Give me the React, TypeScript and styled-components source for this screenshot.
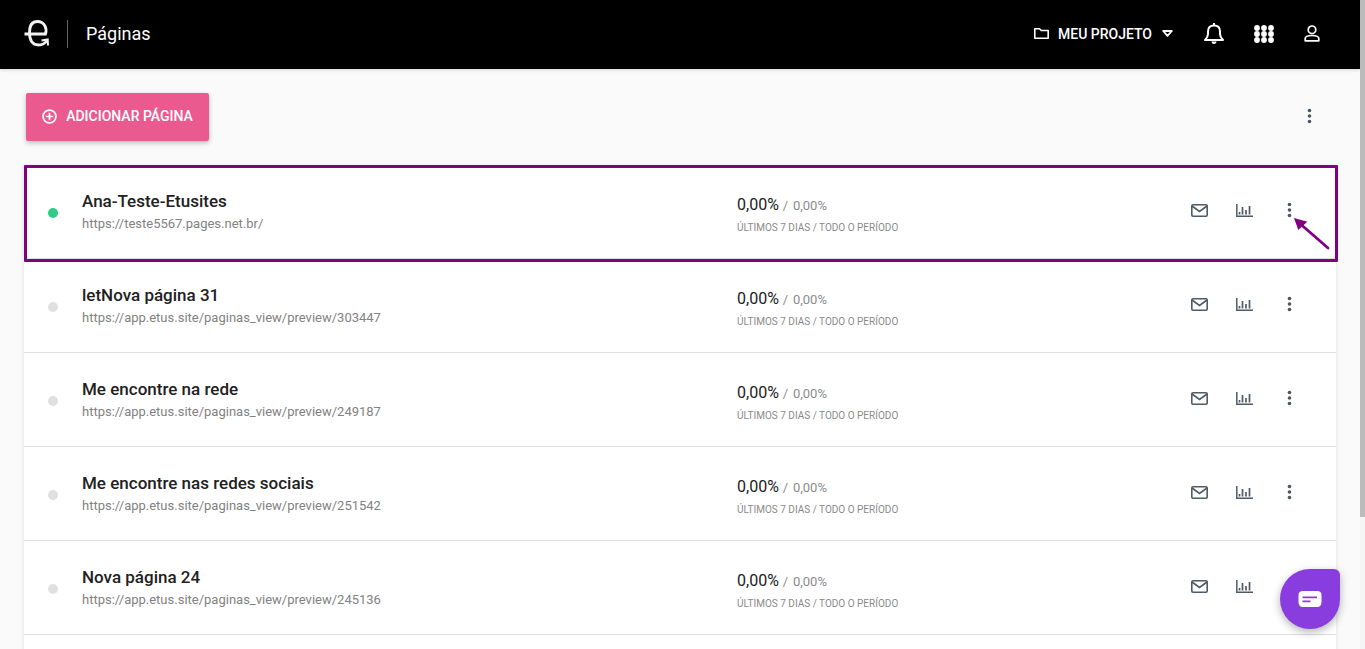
import React from "react";
import styled, { createGlobalStyle } from "styled-components";

const GlobalStyle = createGlobalStyle`
  html, body {
    margin: 0;
    padding: 0;
    height: 100%;
    overflow: hidden;
    background: #fafafa;
    font-family: Roboto, "Liberation Sans", sans-serif;
  }
`;

const Page = styled.div`
  display: flex;
  height: 649px;
  overflow: hidden;
`;

const Main = styled.div`
  flex: 1;
  min-width: 0;
  display: flex;
  flex-direction: column;
`;

const ScrollTrack = styled.div`
  width: 5px;
  background: #f5f5f5;
`;

const ScrollThumb = styled.div`
  height: 517px;
  background: #bbbbbb;
`;

const Header = styled.header`
  height: 69px;
  box-sizing: border-box;
  flex: none;
  background: #000;
  color: #fff;
  display: flex;
  align-items: center;
  padding: 0 40px 2px 24px;
  box-shadow: 0 1px 3px rgba(0, 0, 0, 0.15);
`;

const Divider = styled.span`
  width: 1px;
  height: 28px;
  background: #666;
  margin: 0 18px;
`;

const Title = styled.h1`
  margin: 0;
  font-size: 18px;
  font-weight: 400;
  flex: 1;
`;

const Project = styled.div`
  display: flex;
  align-items: center;
  font-size: 14px;
  font-weight: 500;
  margin-right: 31px;
`;

const ProjectName = styled.span`
  margin: 0 10px 0 9px;
`;

const HeaderIcons = styled.div`
  display: flex;
  align-items: center;
  gap: 30px;
`;

const Content = styled.main`
  padding: 24px 24px 0 24px;
  display: flex;
  flex-direction: column;
`;

const Toolbar = styled.div`
  display: flex;
  align-items: center;
  justify-content: space-between;
  padding: 0 18px 0 2px;
  margin-bottom: 24px;
`;

const ToolbarMenu = styled.div`
  display: flex;
  margin-bottom: 2px;
`;

const AddButton = styled.button`
  width: 183px;
  height: 48px;
  border: 0;
  border-radius: 2px;
  background: #ea5a8f;
  color: #fff;
  font-family: inherit;
  font-size: 14px;
  font-weight: 500;
  display: flex;
  align-items: center;
  justify-content: center;
  gap: 9px;
  padding: 0 0 2px;
  box-shadow: 0 2px 5px rgba(0, 0, 0, 0.25);
`;

const List = styled.div`
  display: flex;
  flex-direction: column;
  width: 1312px;
  background: #fff;
  box-shadow: 0 1px 4px rgba(0, 0, 0, 0.12);
`;

const Row = styled.div`
  position: relative;
  flex: none;
  height: 94px;
  box-sizing: border-box;
  display: grid;
  grid-template-columns: 34px 655px 1fr auto;
  align-items: center;
  padding: 3px 38px 0 24px;
  border-bottom: 1px solid #e0e0e0;
`;

const ListTail = styled.div`
  height: 20px;
  flex: none;
`;

const Highlight = styled.div`
  position: absolute;
  left: 0;
  top: 0;
  width: 1314px;
  height: 97px;
  box-sizing: border-box;
  border: 3px solid #800080;
  border-radius: 1px;
  pointer-events: none;
`;

const Dot = styled.span<{ $on?: boolean }>`
  width: 10px;
  height: 10px;
  border-radius: 50%;
  background: ${(p) => (p.$on ? "#2ecc87" : "#e0e0e0")};
`;

const Name = styled.div`
  font-size: 17px;
  font-weight: 500;
  color: #212121;
  line-height: 20px;
  margin-bottom: 4px;
`;

const Url = styled.div`
  font-size: 13px;
  color: #828282;
  line-height: 18px;
`;

const PageInfo = styled.div`
  padding-bottom: 3px;
`;

const Stats = styled.div`
  display: flex;
  flex-direction: column;
  padding-top: 4px;
`;

const StatLine = styled.div`
  display: flex;
  align-items: baseline;
  gap: 4px;
  line-height: 20px;
  margin-bottom: 5px;
`;

const StatMain = styled.span`
  font-size: 16px;
  color: #212121;
`;

const StatAll = styled.span`
  font-size: 13px;
  color: #8c8c8c;
  word-spacing: 1.5px;
`;

const StatLabel = styled.div`
  font-size: 10px;
  color: #8a8a8a;
  line-height: 14px;
`;

const Actions = styled.div`
  display: flex;
  align-items: center;
  gap: 28px;
  margin-bottom: 6px;
`;

const ChatBubble = styled.div`
  position: fixed;
  left: 1280px;
  top: 569px;
  width: 60px;
  height: 60px;
  border-radius: 50% 6px 50% 50%;
  background: #8a3ddf;
  box-shadow: 0 3px 8px rgba(0, 0, 0, 0.3);
  display: flex;
  align-items: center;
  justify-content: center;
`;

const Arrow = styled.svg`
  position: absolute;
  left: 1266px;
  top: 50px;
`;

const Logo = () => (
  <svg width="25" height="27" viewBox="0 0 25 27" fill="none" stroke="#f2f2f2" strokeWidth="2.8">
    <path d="M0.500 14 H21.500 C23.500 8 20 1.500 13.500 1.500 C8 1.500 5.500 6 5.500 12.500 C5.500 20.500 8.500 25 14.500 25 C18 25 21 23.500 23 20.500" />
    <path d="M17.500 20.500 L23.700 19.500 L24 25.500" strokeWidth="2" />
  </svg>
);

const FolderIcon = () => (
  <svg width="15" height="11" viewBox="0 0 15 11" fill="none" stroke="#fff" strokeWidth="1.600">
    <path d="M0.800 0.800 H5.500 L7.200 2.500 H14.200 V10.200 H0.800 Z" strokeLinejoin="round" />
  </svg>
);

const Caret = () => (
  <svg width="11" height="7" viewBox="0 0 11 7" fill="none" stroke="#fff" strokeWidth="1.800">
    <path d="M1.200 1 H9.800 L5.500 5.800 Z" strokeLinejoin="round" />
  </svg>
);

const BellIcon = () => (
  <svg width="20" height="21" viewBox="0 0 20 21" fill="none" stroke="#fff" strokeWidth="2">
    <path d="M1 17 H19 C17 15 16 14 16 11 V8.500 C16 4.500 13.500 2.500 10 2.500 C6.500 2.500 4 4.500 4 8.500 V11 C4 14 3 15 1 17 Z" strokeLinejoin="round" />
    <path d="M10 0 V3" />
    <path d="M7.500 18.500 H12.500 C12.500 20 11.500 21 10 21 C8.500 21 7.500 20 7.500 18.500 Z" fill="#fff" stroke="none" />
  </svg>
);

const GridIcon = () => (
  <svg width="20" height="18" viewBox="0 0 20 18" fill="#fff">
    {[3, 9, 15].flatMap((y) =>
      [3, 10, 17].map((x) => <circle key={`${x}-${y}`} cx={x} cy={y} r="2.900" />)
    )}
  </svg>
);

const UserIcon = () => (
  <svg width="16" height="17" viewBox="0 0 16 17" fill="none" stroke="#fff" strokeWidth="1.700">
    <circle cx="8" cy="4.800" r="3.800" />
    <path d="M1.200 15.800 V13.500 C1.200 11.500 4 10.500 8 10.500 C12 10.500 14.800 11.500 14.800 13.500 V15.800 Z" strokeLinejoin="round" />
  </svg>
);

const PlusCircle = () => (
  <svg width="15" height="15" viewBox="0 0 15 15" fill="none" stroke="#fff" strokeWidth="1.700">
    <circle cx="7.500" cy="7.500" r="6.400" />
    <path d="M3.800 7.500 H11.200 M7.500 3.800 V11.200" />
  </svg>
);

const Kebab = () => (
  <svg width="17" height="16" viewBox="0 0 17 16" fill="#4a5560">
    <circle cx="8.500" cy="2.500" r="1.800" />
    <circle cx="8.500" cy="8" r="1.800" />
    <circle cx="8.500" cy="13.500" r="1.800" />
  </svg>
);

const MailIcon = () => (
  <svg width="17" height="13" viewBox="0 0 17 13" fill="none" stroke="#4f5b66" strokeWidth="1.600">
    <rect x="0.800" y="0.800" width="15.400" height="11.400" rx="1.200" />
    <path d="M1 2 L8.500 7.500 L16 2" />
  </svg>
);

const ChartIcon = () => (
  <svg width="17" height="13" viewBox="0 0 17 13" fill="none" stroke="#4f5b66" strokeWidth="1.500">
    <path d="M0.800 0 V12.200 H17" />
    <path d="M3.500 10.500 V8 M6.500 10.500 V3 M10 10.500 V6 M13.500 10.500 V2" strokeWidth="1.700" />
  </svg>
);

const ChatIcon = () => (
  <svg width="24" height="18" viewBox="0 0 24 18">
    <path d="M5 1 H19 C22 1 23.500 2.500 23.500 5 V12 C23.500 15 22 17 19 17 H5 C2 17 0.500 15 0.500 12 V5 C0.500 2.500 2 1 5 1 Z" fill="#fff" />
    <path d="M4.500 7.300 H19 M4.500 11.300 H12.500" stroke="#8a3ddf" strokeWidth="1.800" />
  </svg>
);

type PageItem = { name: string; url: string; on?: boolean };

const pages: PageItem[] = [
  { name: "Ana-Teste-Etusites", url: "https://teste5567.pages.net.br/", on: true },
  { name: "letNova página 31", url: "https://app.etus.site/paginas_view/preview/303447" },
  { name: "Me encontre na rede", url: "https://app.etus.site/paginas_view/preview/249187" },
  { name: "Me encontre nas redes sociais", url: "https://app.etus.site/paginas_view/preview/251542" },
  { name: "Nova página 24", url: "https://app.etus.site/paginas_view/preview/245136" },
];

export default function App() {
  return (
    <>
      <GlobalStyle />
      <Page>
        <Main>
          <Header>
            <Logo />
            <Divider />
            <Title>Páginas</Title>
            <Project>
              <FolderIcon />
              <ProjectName>MEU PROJETO</ProjectName>
              <Caret />
            </Project>
            <HeaderIcons>
              <BellIcon />
              <GridIcon />
              <UserIcon />
            </HeaderIcons>
          </Header>
          <Content>
            <Toolbar>
              <AddButton>
                <PlusCircle />
                ADICIONAR PÁGINA
              </AddButton>
              <ToolbarMenu>
                <Kebab />
              </ToolbarMenu>
            </Toolbar>
            <List>
              {pages.map((page, i) => (
                <Row key={page.url}>
                  <Dot $on={page.on} />
                  <PageInfo>
                    <Name>{page.name}</Name>
                    <Url>{page.url}</Url>
                  </PageInfo>
                  <Stats>
                    <StatLine>
                      <StatMain>0,00%</StatMain>
                      <StatAll>/ 0,00%</StatAll>
                    </StatLine>
                    <StatLabel>ÚLTIMOS 7 DIAS / TODO O PERÍODO</StatLabel>
                  </Stats>
                  <Actions>
                    <MailIcon />
                    <ChartIcon />
                    <Kebab />
                  </Actions>
                  {i === 0 && (
                    <>
                      <Highlight />
                      <Arrow width="44" height="40" viewBox="0 0 44 40">
                        <path d="M4 3 L17.300 6.700 L8.300 15 Z" fill="#800080" />
                        <path d="M11 9.500 L38 33" stroke="#800080" strokeWidth="2.800" strokeLinecap="round" />
                      </Arrow>
                    </>
                  )}
                </Row>
              ))}
              <ListTail />
            </List>
          </Content>
        </Main>
        <ScrollTrack>
          <ScrollThumb />
        </ScrollTrack>
      </Page>
      <ChatBubble>
        <ChatIcon />
      </ChatBubble>
    </>
  );
}
